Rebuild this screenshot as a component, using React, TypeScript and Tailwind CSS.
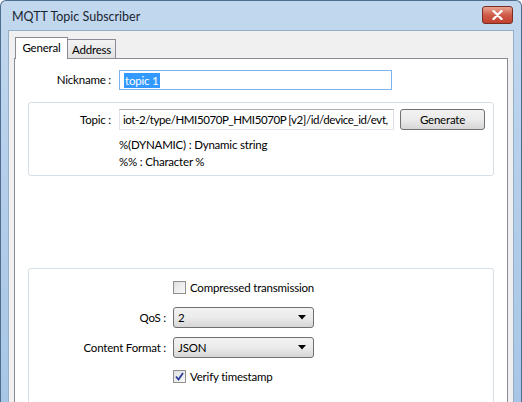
import React from "react"

const font = { fontFamily: 'Lato, "Noto Sans", sans-serif' }

const Checkbox = ({ checked, label }: { checked?: boolean; label: string }) => (
  <div className="flex items-center gap-[4px] h-[13px]">
    <div className="w-[13px] h-[13px] border border-[#8f8f8f] bg-gradient-to-br from-[#dcdcdc] to-[#fbfbfb] flex items-center justify-center p-[1px]">
      <div className="w-full h-full bg-gradient-to-br from-[#e4e4e4] to-[#f6f6f6] flex items-center justify-center">
        {checked && (
          <svg width="9" height="9" viewBox="0 0 9 9">
            <path d="M1 4.5 L3.5 7.5 L8 1" fill="none" stroke="#2b3d9c" strokeWidth="1.8" />
          </svg>
        )}
      </div>
    </div>
    <span>{label}</span>
  </div>
)

const Select = ({ value }: { value: string }) => (
  <div className="w-[141px] h-[21px] rounded-[3px] border border-[#707070] bg-gradient-to-b from-[#f2f2f2] via-[#ebebeb] to-[#d6d6d6] flex items-center pl-[4px] pr-[7px] justify-between">
    <span>{value}</span>
    <svg width="8" height="5" viewBox="0 0 8 5">
      <path d="M0 0 H8 L4 4.5 Z" fill="#000" />
    </svg>
  </div>
)

export default function App() {
  return (
    <div
      className="w-[522px] h-[402px] overflow-hidden rounded-t-[6px] border border-b-0 border-[#4f6d8f] bg-gradient-to-b from-[#c2d8ee] via-[#b3cdea] to-[#a7c6e6] flex flex-col text-[11.5px] tracking-[-0.2px] leading-[14px] text-black"
      style={font}
    >
      {/* title bar */}
      <div className="h-[29px] flex items-center justify-between pl-[11px] pr-[8px] shrink-0">
        <span className="text-[12.5px] tracking-normal text-[#1a2533] pt-[2px]">MQTT Topic Subscriber</span>
        <div className="w-[31px] h-[18px] mt-[-1px] rounded-[3px] border border-[#7a2e24] bg-gradient-to-b from-[#e8a493] via-[#cf5b49] to-[#c0402e] flex items-center justify-center">
          <svg width="11" height="10" viewBox="0 0 11 10">
            <path d="M1.5 1 L9.5 9 M9.5 1 L1.5 9" stroke="#fff" strokeWidth="2.4" strokeLinecap="round" />
          </svg>
        </div>
      </div>

      {/* client area */}
      <div className="flex-1 mx-[7px] border border-b-0 border-[#95aec8] bg-[#f0f0f0] pt-[6px] px-[5px] flex flex-col">
        {/* tabs */}
        <div className="flex items-end h-[22px] pl-[1px] relative z-10">
          <div className="h-[22px] w-[53px] bg-white border border-b-0 border-[#898c95] flex items-center justify-center pb-[1px]">
            General
          </div>
          <div className="h-[19px] w-[48px] mb-[1px] bg-gradient-to-b from-[#f3f3f3] to-[#e2e2e2] border border-l-0 border-b-0 border-[#898c95] flex items-center justify-center pt-[1px]">
            Address
          </div>
        </div>

        {/* tab panel */}
        <div className="flex-1 -mt-[1px] bg-white border border-b-0 border-[#898c95] pt-[11px] pl-[13px] pr-[10px]">
          {/* nickname */}
          <div className="flex items-center h-[20px]">
            <div className="text-right pr-[8px] -ml-[13px] w-[104px]">Nickname :</div>
            <div className="w-[273px] h-[20px] border border-[#7eb4ea] flex items-center pl-[4px]">
              <span className="bg-[#3399ff] text-white leading-[15px] px-[1px]">topic 1</span>
            </div>
          </div>

          {/* topic group */}
          <div className="mt-[12px] w-[466px] h-[74px] rounded-[3px] border border-[#d5dfe5] pt-[6px]">
            <div className="flex items-center">
              <div className="w-[90px] text-right pr-[8px]">Topic :</div>
              <div className="w-[275px] h-[21px] border border-[#abadb3] border-l-[#e2e3ea] border-r-[#dbdfe6] border-b-[#e3e9ef] flex items-center pl-[3px] overflow-hidden whitespace-nowrap tracking-[-0.42px]">
                iot-2/type/HMI5070P_HMI5070P [v2]/id/device_id/evt,
              </div>
              <div className="ml-[6px] w-[85px] h-[21px] rounded-[3px] border border-[#707070] bg-gradient-to-b from-[#f2f2f2] via-[#ebebeb] to-[#d6d6d6] flex items-center justify-center">
                Generate
              </div>
            </div>
            <div className="ml-[90px] mt-[6px] leading-[17px]">
              <div>%(DYNAMIC) : Dynamic string</div>
              <div>%% : Character %</div>
            </div>
          </div>

          {/* options group */}
          <div className="mt-[92px] w-[466px] h-[140px] rounded-[3px] border border-[#d5dfe5] pt-[12px]">
            <div className="ml-[144px]">
              <Checkbox label="Compressed transmission" />
            </div>
            <div className="mt-[13px] flex items-center">
              <div className="w-[144px] text-right pr-[7px]">QoS :</div>
              <Select value="2" />
            </div>
            <div className="mt-[9px] flex items-center">
              <div className="w-[144px] text-right pr-[7px]">Content Format :</div>
              <Select value="JSON" />
            </div>
            <div className="ml-[144px] mt-[12px]">
              <Checkbox checked label="Verify timestamp" />
            </div>
          </div>
        </div>
      </div>
    </div>
  )
}
